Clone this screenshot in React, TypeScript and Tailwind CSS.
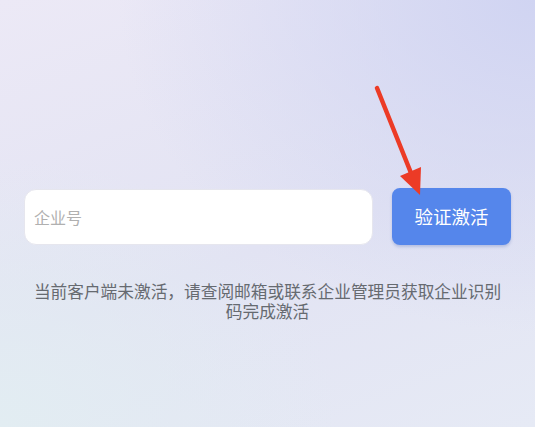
import React from 'react';

const cjk = { fontFamily: '"Noto Sans CJK SC", "Noto Sans", sans-serif' };

export default function App() {
  return (
    <div
      className="relative w-[535px] h-[427px] overflow-hidden bg-[radial-gradient(ellipse_at_100%_0%,#d0d4f2_0%,rgba(208,212,242,0)_55%),radial-gradient(ellipse_at_0%_100%,#e2edf2_0%,rgba(226,237,242,0)_45%),linear-gradient(160deg,#ece9f6_0%,#e2e3f3_55%,#e6eaf5_100%)]"
      style={cjk}
    >
      <div className="flex flex-col px-6 pt-[188px]">
        {/* activation row */}
        <div className="flex items-center gap-[19px]">
          <div className="flex-1 h-[56px] mt-px rounded-[12px] bg-white border border-[#e6e6ee] flex items-center pl-[9px]">
            <input
              placeholder="企业号"
              className="w-full bg-transparent text-[16px] text-[#333] placeholder-[#b0b0b0] outline-none"
              style={cjk}
            />
          </div>
          <button className="w-[119px] h-[57px] rounded-[8px] bg-[#5586eb] text-white text-[18.5px] shadow-[0_2px_3px_rgba(60,90,170,0.25)]">
            验证激活
          </button>
        </div>

        <p className="mt-[36px] px-[6px] text-center text-[16.7px] leading-[20px] text-[#666a70]">
          当前客户端未激活，请查阅邮箱或联系企业管理员获取企业识别码完成激活
        </p>
      </div>

      {/* annotation arrow */}
      <svg className="absolute left-0 top-0 pointer-events-none" width="535" height="427">
        <line x1="377" y1="88" x2="413" y2="178" stroke="#ec3b26" strokeWidth="4.5" strokeLinecap="round" />
        <polygon points="420,195 421,167 400,176" fill="#ec3b26" />
      </svg>
    </div>
  );
}
